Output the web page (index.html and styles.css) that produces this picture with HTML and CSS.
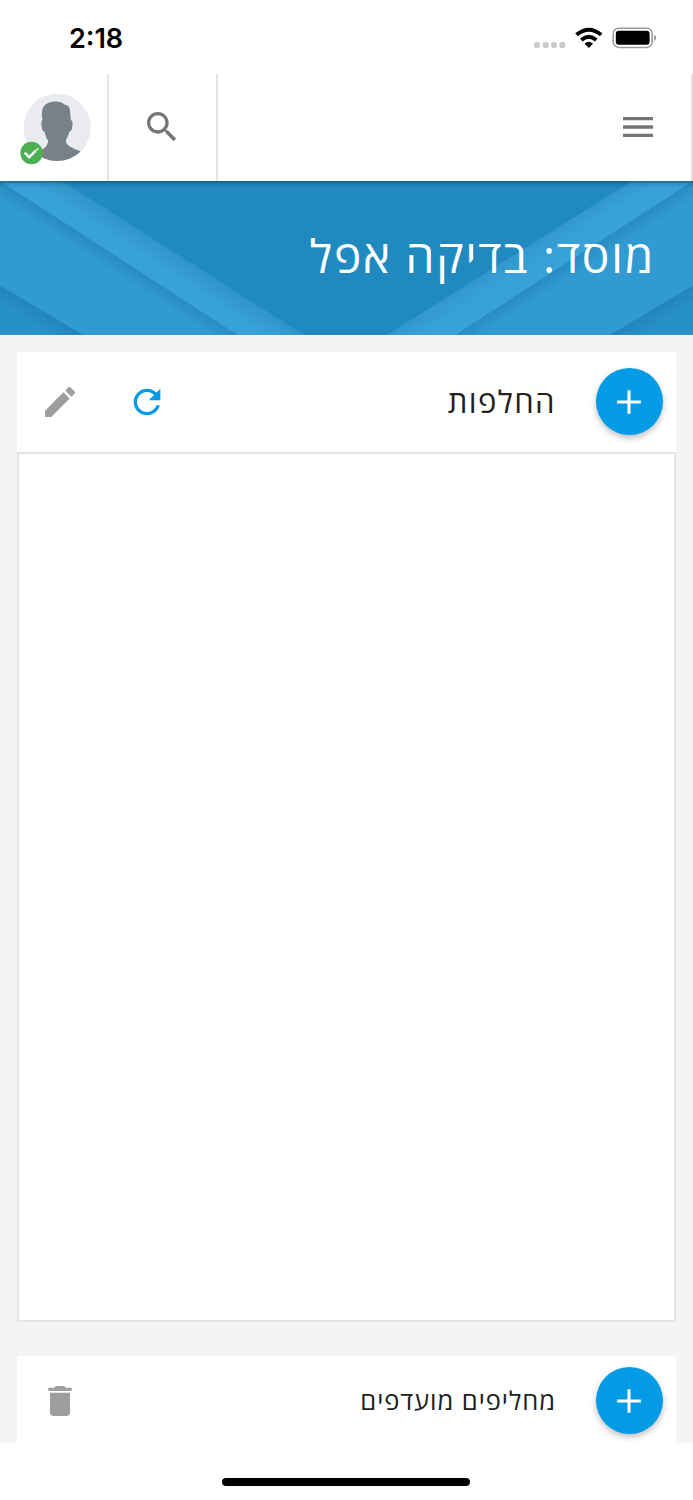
FILE: index.html
```html
<!DOCTYPE html>
<html lang="he" dir="rtl">
<head>
<meta charset="utf-8">
<title>מוסד: בדיקה אפל</title>
<link rel="stylesheet" href="styles.css">
</head>
<body>
<div class="status" dir="ltr">
  <span class="time">2:18</span>
  <svg class="signals" width="124" height="24" viewBox="533 26 124 24">
    <g fill="#cbcbcb"><rect x="534" y="42" width="6" height="6" rx="2"/><rect x="542.7" y="42" width="6" height="6" rx="2"/><rect x="551" y="42" width="6" height="6" rx="2"/><rect x="559.3" y="42" width="6" height="6" rx="2"/></g>
    <g fill="none" stroke="#000" stroke-width="3.9"><path d="M576.5 34.8Q588.8 24.6 601.2 34.8"/><path d="M581.3 40Q588.8 33.7 596.3 40"/></g>
    <path d="M584.6 43.7Q588.8 40 593 43.7L588.8 48Z"/>
    <rect x="613.2" y="28.2" width="39" height="19.2" rx="5.5" fill="none" stroke="#999" stroke-width="1.5"/>
    <rect x="615.8" y="30.8" width="33.8" height="14" rx="3"/>
    <path d="M654.1 34.8Q656.3 36 656.3 37.8T654.1 41Z" fill="#999"/>
  </svg>
</div>
<header class="nav" dir="ltr">
  <div class="cell account">
    <svg width="72" height="72" viewBox="20 93 72 72">
      <clipPath id="face"><circle cx="57.2" cy="127.4" r="33.6"/></clipPath>
      <circle cx="57.2" cy="127.4" r="33.6" fill="#e9ebf0"/>
      <path clip-path="url(#face)" fill="#788089" d="M42.6 120C41.2 115.5 41.6 108.5 44.5 105.5C48.5 101.4 59.5 99.6 64.8 104.8C68 105 70 107.3 70 111L70.8 120C73 121 72.8 124 72.2 127C71.8 130.5 70.3 132 69.2 131.8C68.8 135.5 66.5 138.5 65.8 141C66.5 145 70 147.4 80 151L84 162H33L40 151C45 148 47.6 146 48.2 140.5C46 138.4 45.4 135 44.7 131.8C43.2 132 42.2 130 41.7 127C41.1 123.5 41.2 121 42.6 120Z"/>
      <circle cx="31.5" cy="153" r="11.2" fill="#4caf50"/>
      <path d="M24.7 152.7L29.2 157.2L35.5 150.8" fill="none" stroke="#fff" stroke-width="2.4"/>
      <path d="M33.2 152.8L38.5 148.3" fill="none" stroke="#dfeadf" stroke-width="1.6"/>
    </svg>
  </div>
  <div class="cell search">
    <svg class="icon" viewBox="0 0 24 24" fill="#757575"><path d="M15.5 14h-.79l-.28-.27C15.41 12.59 16 11.11 16 9.5 16 5.91 13.09 3 9.5 3S3 5.91 3 9.5 5.91 16 9.5 16c1.61 0 3.09-.59 4.23-1.57l.27.28v.79l5 4.99L20.49 19l-4.99-5zm-6 0C7.01 14 5 11.99 5 9.5S7.01 5 9.5 5 14 7.01 14 9.5 11.99 14 9.5 14z"/></svg>
  </div>
  <div class="cell menu">
    <svg class="icon" viewBox="0 0 24 24" fill="#757575"><path d="M3 18h18v-2H3v2zm0-5h18v-2H3v2zm0-7v2h18V6H3z"/></svg>
  </div>
</header>
<section class="banner">
  <svg class="pattern" viewBox="0 0 693 154" preserveAspectRatio="none">
    <defs>
      <linearGradient id="bandL" gradientUnits="userSpaceOnUse" x1="62" y1="0" x2="51" y2="17"><stop stop-color="#2f96ca"/><stop offset="1" stop-color="#38a1d7"/></linearGradient>
      <linearGradient id="midL" gradientUnits="userSpaceOnUse" x1="0" y1="0" x2="-9" y2="14"><stop stop-color="#278bc0"/><stop offset="1" stop-color="#319bd1"/></linearGradient>
      <linearGradient id="lowL" gradientUnits="userSpaceOnUse" x1="0" y1="104.5" x2="-8" y2="118"><stop stop-color="#2185b9"/><stop offset="1" stop-color="#2790c7"/></linearGradient>
      <linearGradient id="bandR" gradientUnits="userSpaceOnUse" x1="632" y1="0" x2="641" y2="14"><stop stop-color="#3199ce"/><stop offset="1" stop-color="#38a1d7"/></linearGradient>
      <linearGradient id="midR" gradientUnits="userSpaceOnUse" x1="692" y1="0" x2="701" y2="14"><stop stop-color="#278bc0"/><stop offset="1" stop-color="#319bd1"/></linearGradient>
      <linearGradient id="lowR" gradientUnits="userSpaceOnUse" x1="693" y1="104.5" x2="701" y2="118"><stop stop-color="#2185b9"/><stop offset="1" stop-color="#2790c7"/></linearGradient>
      <linearGradient id="top" x2="0" y2="1"><stop stop-color="#003450" stop-opacity=".5"/><stop offset=".4" stop-color="#003450" stop-opacity=".15"/><stop offset="1" stop-color="#003450" stop-opacity="0"/></linearGradient>
    </defs>
    <path fill="#2089bf" d="M0 0H693V154H0Z"/>
    <path fill="url(#bandL)" d="M0 0H62L304 154H0Z"/>
    <path fill="url(#midL)" d="M0 0L237.5 154H0Z"/>
    <path fill="url(#lowL)" d="M0 104.5L83 154H0Z"/>
    <path fill="url(#bandR)" d="M693 0H632L387 154H693Z"/>
    <path fill="url(#midR)" d="M693 0L455 154H693Z"/>
    <path fill="url(#lowR)" d="M693 104.5L610 154H693Z"/>
    <path fill="url(#top)" d="M0 0H693V7H0Z"/>
  </svg>
  <h1 class="title">מוסד: בדיקה אפל</h1>
</section>
<main class="content">
  <section class="card primary">
    <div class="bar">
      <button class="add" aria-label="הוספה"><svg class="icon" viewBox="0 0 24 24" fill="#fff"><path d="M19.1 12.9h-6.2v6.2h-1.8v-6.2H4.9v-1.8h6.2V4.9h1.8v6.2h6.2z"/></svg></button>
      <h2 class="heading">החלפות</h2>
      <div class="actions">
        <svg class="icon" viewBox="0 0 24 24" fill="#039be5"><path d="M17.65 6.35C16.2 4.9 14.21 4 12 4c-4.42 0-7.99 3.58-7.99 8s3.57 8 7.99 8c3.73 0 6.84-2.55 7.73-6h-2.08c-.82 2.33-3.04 4-5.65 4-3.31 0-6-2.69-6-6s2.69-6 6-6c1.66 0 3.14.69 4.22 1.78L13 11h7V4l-2.35 2.35z"/></svg>
        <svg class="icon" viewBox="0 0 24 24" fill="#9e9e9e"><path d="M3 17.25V21h3.75L17.81 9.94l-3.75-3.75L3 17.25zM20.71 7.04c.39-.39.39-1.02 0-1.41l-2.34-2.34c-.39-.39-1.02-.39-1.41 0l-1.83 1.83 3.75 3.75 1.83-1.83z"/></svg>
      </div>
    </div>
    <div class="list"></div>
  </section>
  <section class="card secondary">
    <div class="bar">
      <button class="add" aria-label="הוספה"><svg class="icon" viewBox="0 0 24 24" fill="#fff"><path d="M19.1 12.9h-6.2v6.2h-1.8v-6.2H4.9v-1.8h6.2V4.9h1.8v6.2h6.2z"/></svg></button>
      <h2 class="heading small">מחליפים מועדפים</h2>
      <div class="actions">
        <svg class="icon" viewBox="0 0 24 24" fill="#9e9e9e"><path d="M6 19c0 1.1.9 2 2 2h8c1.1 0 2-.9 2-2V7H6v12zM19 4h-3.5l-1-1h-5l-1 1H5v2h14V4z"/></svg>
      </div>
    </div>
  </section>
</main>
<footer class="home"><div class="indicator"></div></footer>
</body>
</html>
```
FILE: styles.css
```css
* { box-sizing: border-box; }
body {
  margin: 0;
  width: 693px;
  height: 1500px;
  display: flex;
  flex-direction: column;
  overflow: hidden;
  background: #fff;
  font-family: "Open Sans", "Noto Sans", "DejaVu Sans", sans-serif;
}
svg { display: block; flex: none; }
h1, h2 { margin: 0; font-weight: 430; white-space: nowrap; }
.status {
  height: 74px;
  flex: none;
  display: flex;
  justify-content: space-between;
  align-items: flex-start;
  padding: 26px 36px 0 69px;
}
.time {
  font: 600 27px/25px Inter, sans-serif;
  color: #000;
}
.nav {
  height: 107px;
  flex: none;
  display: flex;
  border-right: 2px solid #e0e0e0;
}
.cell { display: flex; align-items: center; padding-bottom: 1px; }
.account { width: 109px; padding: 3px 0 0 20px; border-right: 2px solid #e4e4e4; }
.search { width: 109px; padding-left: 33px; border-right: 2px solid #e4e4e4; }
.menu { flex: 1; justify-content: flex-end; padding-right: 33px; }
.icon { width: 40px; height: 40px; }
.banner { height: 154px; flex: none; display: grid; overflow: hidden; }
.pattern { grid-area: 1 / 1; width: 693px; height: 154px; }
.title {
  grid-area: 1 / 1;
  z-index: 1;
  padding: 41px 38px 0 0;
  font-size: 46px;
  line-height: 66px;
  letter-spacing: 1.8px;
  color: #fff;
}
.content {
  height: 1108px;
  flex: none;
  padding: 17px 17px 0;
  background: #f4f4f4;
  overflow: hidden;
}
.bar {
  display: flex;
  align-items: center;
  padding: 0 13px 0 23px;
  background: #fff;
}
.primary .bar { height: 100px; }
.secondary { margin-top: 34px; }
.secondary .bar { height: 90px; }
.add {
  width: 67px;
  height: 67px;
  flex: none;
  display: flex;
  align-items: center;
  justify-content: center;
  margin-bottom: 1px;
  padding: 0;
  border: 0;
  border-radius: 50%;
  background: #039be5;
  box-shadow: 0 3px 6px rgba(0, 0, 0, .26);
}
.add .icon { margin-right: 2px; }
.heading {
  margin-right: 40px;
  padding-bottom: 3px;
  font-size: 31px;
  line-height: 46px;
  letter-spacing: 1.4px;
  color: #212121;
}
.heading.small { font-size: 25.5px; letter-spacing: .95px; }
.actions { display: flex; gap: 47px; margin-right: auto; }
.list { height: 870px; border: 2px solid #e4e4e4; background: #fff; }
.home {
  height: 57px;
  flex: none;
  display: flex;
  justify-content: center;
  align-items: flex-start;
  padding: 35px 1px 0 0;
}
.indicator { width: 248px; height: 8px; border-radius: 4px; background: #000; }
```
